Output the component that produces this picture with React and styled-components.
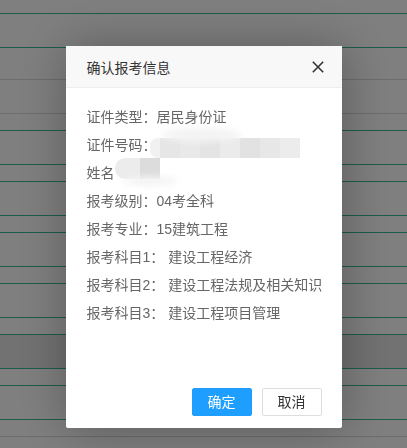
import React from "react";
import styled, { createGlobalStyle } from "styled-components";

const Global = createGlobalStyle`
  html, body { margin: 0; padding: 0; background: #fff; }
  body { font-family: "Liberation Sans", "Noto Sans CJK SC", sans-serif; overflow: hidden; }
  * { box-sizing: border-box; }
`;

const Page = styled.div`
  width: 407px;
  height: 448px;
  display: flex;
  flex-direction: column;
  background: #fff;
`;

const Band = styled.div`
  flex: none;
  height: ${(p) => p.$h}px;
  border-top: ${(p) => (p.$line ? `1px solid ${p.$line}` : "none")};
  background: ${(p) => p.$bg || "transparent"};
`;

const Shade = styled.div`
  position: fixed;
  inset: 0;
  background: rgba(0, 0, 0, 0.5);
`;

const Layer = styled.div`
  position: fixed;
  inset: 0;
  display: flex;
  justify-content: center;
  align-items: flex-start;
  padding-top: 46px;
`;

const Dialog = styled.div`
  width: 276px;
  height: 382px;
  background: #fff;
  border-radius: 2px;
  box-shadow: 1px 1px 50px rgba(0, 0, 0, 0.3);
  display: flex;
  flex-direction: column;
  font-family: "Liberation Sans", "Noto Sans CJK SC", sans-serif;
`;

const Header = styled.div`
  height: 42px;
  flex: none;
  display: flex;
  align-items: center;
  justify-content: space-between;
  padding: 0 18px 0 21px;
  background: #f8f8f8;
  border-bottom: 1px solid #eee;
  color: #333;
  font-size: 14px;
`;

const Close = styled.button`
  width: 12px;
  height: 12px;
  padding: 0;
  border: 0;
  background: none;
  display: flex;
  cursor: pointer;
`;

const Body = styled.div`
  flex: 1;
  padding: 15px 21px 0;
  color: #666;
  font-size: 14px;
`;

const Line = styled.div`
  height: 28px;
  line-height: 28px;
  display: flex;
  align-items: center;
  white-space: nowrap;
`;

const Masked = styled.span`
  position: relative;
  display: inline-flex;
  height: ${(p) => p.$h}px;
  margin-top: ${(p) => p.$dy}px;
  margin-left: ${(p) => p.$dx || 0}px;
  filter: blur(0.6px);
`;

const Tile = styled.span`
  width: ${(p) => p.$w}px;
  height: 100%;
  background: ${(p) => p.$c};
  border-radius: ${(p) => p.$r || "0"};
`;

const Haze = styled.span`
  position: absolute;
  left: ${(p) => p.$x}px;
  top: ${(p) => p.$y}px;
  width: ${(p) => p.$w}px;
  height: ${(p) => p.$h}px;
  background: ${(p) => p.$c};
  border-radius: 50%;
  filter: blur(3px);
`;

const Footer = styled.div`
  flex: none;
  display: flex;
  justify-content: flex-end;
  padding: 0 15px 12px;
`;

const Btn = styled.button`
  height: 28px;
  margin: 0 5px;
  padding: 0 15px;
  border-radius: 2px;
  border: 1px solid ${(p) => (p.$primary ? "#1E9FFF" : "#dedede")};
  background: ${(p) => (p.$primary ? "#1E9FFF" : "#fff")};
  color: ${(p) => (p.$primary ? "#fff" : "#333")};
  font-family: "Liberation Sans", "Noto Sans CJK SC", sans-serif;
  font-size: 14px;
  line-height: 26px;
  cursor: pointer;
`;

const G = "#3ab89a";
const X = "#d8d8d8";
const bands = [
  { h: 13 },
  { h: 34, line: G },
  { h: 32, line: G },
  { h: 34, line: X },
  { h: 17, line: X },
  { h: 34, line: G },
  { h: 17, line: G },
  { h: 34, line: G },
  { h: 17, line: G },
  { h: 34, line: G },
  { h: 17, line: G },
  { h: 34, line: G },
  { h: 17, line: G },
  { h: 34, line: G, bg: "#e4e4e4" },
  { h: 17, line: G },
  { h: 34, line: G },
  { h: 17, line: G },
  { h: 12, line: X },
];

const idTiles = ["#f1f1f1", "#e6e6e6", "#e9e9e9", "#e4e4e4", "#ebebeb", "#e2e2e2", "#e7e7e7", "#ececec"];

const subjects = [
  ["报考科目1：", "建设工程经济"],
  ["报考科目2：", "建设工程法规及相关知识"],
  ["报考科目3：", "建设工程项目管理"],
];

export default function App() {
  return (
    <>
      <Global />
      <Page>
        {bands.map((b, i) => (
          <Band key={i} $h={b.h} $line={b.line} $bg={b.bg} />
        ))}
      </Page>
      <Shade />
      <Layer>
        <Dialog>
          <Header>
            <span>确认报考信息</span>
            <Close aria-label="关闭">
              <svg width="12" height="12" viewBox="0 0 12 12">
                <path d="M0.8 0.8 L11.2 11.2 M11.2 0.8 L0.8 11.2" stroke="#333" strokeWidth="1.6" fill="none" />
              </svg>
            </Close>
          </Header>
          <Body>
            <Line>证件类型：居民身份证</Line>
            <Line>
              证件号码：
              <Masked $h={20} $dy={5} $dx={-7}>
                {idTiles.map((c, i) => (
                  <Tile key={i} $w={i === 0 ? 10 : 20} $c={c} $r={i === 0 ? "8px 0 0 8px" : "0"} />
                ))}
                <Haze $x={12} $y={-10} $w={80} $h={14} $c="#f3f3f3" />
              </Masked>
            </Line>
            <Line>
              姓名
              <Masked $h={21} $dy={-9}>
                <Tile $w={25} $c="#ececec" $r="10px 0 0 10px" />
                <Tile $w={20} $c="#dcdcdc" />
                <Haze $x={8} $y={18} $w={55} $h={10} $c="#f4f4f4" />
              </Masked>
            </Line>
            <Line>报考级别：04考全科</Line>
            <Line>报考专业：15建筑工程</Line>
            {subjects.map(([k, v]) => (
              <Line key={k}>
                {k}&nbsp;{v}
              </Line>
            ))}
          </Body>
          <Footer>
            <Btn $primary>确定</Btn>
            <Btn>取消</Btn>
          </Footer>
        </Dialog>
      </Layer>
    </>
  );
}
